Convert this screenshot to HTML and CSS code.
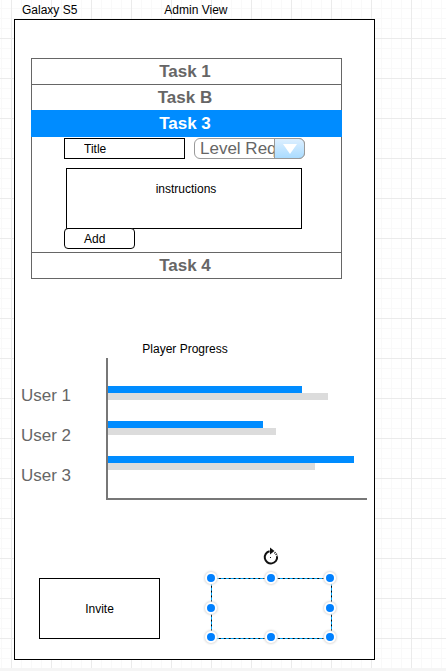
FILE: index.html
```html
<!DOCTYPE html>
<html lang="en">
<head>
<meta charset="utf-8">
<title>Admin View</title>
<link rel="stylesheet" href="styles.css">
</head>
<body>
<main class="canvas">
  <header class="captions">
    <span>Galaxy S5</span>
    <span>Admin View</span>
  </header>
  <div class="device">
    <section class="tasks">
      <button class="task" type="button">Task 1</button>
      <button class="task" type="button">Task B</button>
      <button class="task task-active" type="button">Task 3</button>
      <form class="task-form">
        <div class="fields">
          <input class="title-field" type="text" value="Title" aria-label="Title">
          <div class="level">
            <select class="level-select" aria-label="Level Req">
              <option>Level Req</option>
            </select>
            <span class="level-arrow">
              <svg width="14" height="10" viewBox="0 0 14 10" aria-hidden="true"><path d="M0 0H14L7 10Z" fill="#fff"/></svg>
            </span>
          </div>
        </div>
        <textarea class="instructions" aria-label="instructions">instructions</textarea>
        <button class="add" type="button">Add</button>
      </form>
      <button class="task task-last" type="button">Task 4</button>
    </section>

    <figure class="progress">
      <figcaption class="progress-title">Player Progress</figcaption>
      <div class="chart">
        <ul class="users">
          <li>User 1</li>
          <li>User 2</li>
          <li>User 3</li>
        </ul>
        <div class="plot">
          <div class="pair"><div class="bar bar-blue" style="width:75%"></div><div class="bar" style="width:85%"></div></div>
          <div class="pair"><div class="bar bar-blue" style="width:60%"></div><div class="bar" style="width:65%"></div></div>
          <div class="pair"><div class="bar bar-blue" style="width:95%"></div><div class="bar" style="width:80%"></div></div>
        </div>
      </div>
    </figure>

    <div class="actions">
      <button class="box" type="button">Invite</button>
      <div class="box selected">
        <svg class="rotate" width="20" height="20" viewBox="0 0 20 20" aria-hidden="true">
          <path d="M8.6 4.2A6.2 6.2 0 1 0 16.1 9.5" fill="none" stroke="#111" stroke-width="2"/>
          <path d="M9 0.5L13.5 4L9 7.5Z" fill="#111"/>
          <path d="M13.5 5.5A6.2 6.2 0 0 1 16.1 9.5" fill="none" stroke="#111" stroke-width="2" stroke-dasharray="1 1"/>
          <rect x="9" y="10" width="1" height="1" fill="#111"/>
        </svg>
        <i class="handle top left"></i>
        <i class="handle top center"></i>
        <i class="handle top right"></i>
        <i class="handle middle left"></i>
        <i class="handle middle right"></i>
        <i class="handle bottom left"></i>
        <i class="handle bottom center"></i>
        <i class="handle bottom right"></i>
      </div>
    </div>
  </div>
</main>
</body>
</html>
```
FILE: styles.css
```css
* {
  box-sizing: border-box;
}

body {
  margin: 0;
  background: #f5f5f5;
  color: #000;
  font: 12px/16px "Liberation Sans", Arial, sans-serif;
}

button,
input,
select,
textarea {
  margin: 0;
  border-radius: 0;
  color: inherit;
  font: inherit;
}

.canvas {
  padding: 0 71px 8px 14px;
  background-color: #fff;
  background-image:
    linear-gradient(to right, #ebebeb 1px, transparent 1px),
    linear-gradient(to bottom, #ebebeb 1px, transparent 1px),
    linear-gradient(to right, #f9f9f9 1px, transparent 1px),
    linear-gradient(to bottom, #f9f9f9 1px, transparent 1px);
  background-position: 11px 0, 0 38px, 1px 0, 0 8px;
  background-size: 40px 40px, 40px 40px, 10px 10px, 10px 10px;
}

.captions {
  display: flex;
  gap: 87px;
  height: 19px;
  padding: 2px 8px 0;
}

.device {
  padding: 38px 0 20px;
  border: 1px solid #000;
  background: #fff;
}

.tasks {
  margin: 0 32px 0 16px;
  border: 1px solid #666;
}

.task {
  display: block;
  width: 100%;
  height: 26px;
  padding: 1px 3px 0 0;
  border: 0;
  border-bottom: 1px solid #666;
  background: #fff;
  color: #666;
  font-size: 17px;
  font-weight: bold;
  line-height: 24px;
}

.task-active {
  width: calc(100% + 2px);
  height: 27px;
  margin: -1px -1px 0;
  border: 0;
  background: #008cff;
  color: #fff;
}

.task-last {
  border-top: 1px solid #666;
  border-bottom: 0;
}

.task-form {
  padding: 1px 36px 3px 32px;
}

.fields {
  display: flex;
  gap: 9px;
  margin-bottom: 9px;
}

.title-field {
  width: 121px;
  height: 21px;
  padding: 0 19px;
  border: 1px solid #000;
  background: #fff;
}

.level {
  display: flex;
  position: relative;
  width: 111px;
  height: 21px;
}

.level-select {
  width: 100%;
  padding: 1px 28px 0 5px;
  border: 1px solid #999;
  border-radius: 6px;
  appearance: none;
  background: #fff;
  color: #666;
  font-size: 17px;
  line-height: 18px;
}

.level-arrow {
  display: flex;
  position: absolute;
  top: 0;
  right: 0;
  bottom: 0;
  align-items: center;
  justify-content: center;
  width: 31px;
  border: 1px solid #999;
  border-radius: 0 6px 6px 0;
  background: linear-gradient(#ddefff, #aadcff);
  pointer-events: none;
}

.instructions {
  display: block;
  width: calc(100% - 5px);
  height: 61px;
  margin-left: 2px;
  padding: 12px 0 0 4px;
  border: 1px solid #000;
  background: #fff;
  resize: none;
  text-align: center;
}

.add {
  display: block;
  position: relative;
  width: 71px;
  height: 21px;
  margin-top: -1px;
  padding: 0 19px;
  border: 1px solid #000;
  border-radius: 4px;
  background: #fff;
  text-align: left;
}

.progress {
  margin: 62px 0 0;
  padding: 0 7px 0 6px;
}

.progress-title {
  margin-bottom: 1px;
  padding-right: 18px;
  text-align: center;
}

.chart {
  display: grid;
  grid-template-columns: 85px 1fr;
}

.users {
  margin: 0;
  padding: 18px 0 0;
  color: #666;
  font-size: 17px;
  line-height: 40px;
  list-style: none;
}

.plot {
  display: flex;
  flex-direction: column;
  gap: 21px;
  padding: 28px 0;
  border: solid #777;
  border-width: 0 0 2px 2px;
}

.bar {
  height: 7px;
  background: #dcdcdc;
}

.bar-blue {
  background: #008cff;
}

.actions {
  display: flex;
  gap: 51px;
  margin-top: 78px;
  padding: 0 42px 0 24px;
}

.box {
  flex: 1;
  height: 61px;
  padding: 0;
  border: 1px solid #000;
  background: #fff;
}

.selected {
  position: relative;
}

.selected::before {
  content: "";
  position: absolute;
  inset: -1px;
  border: 1px dashed #00a8ff;
}

.handle {
  position: absolute;
  width: 12px;
  height: 12px;
  margin: -7px;
  border: 2px solid #fff;
  border-radius: 50%;
  background: #0080ff;
  box-shadow: 0 0 2px 1px #ddd;
}

.top {
  top: 0;
}

.middle {
  top: 50%;
}

.bottom {
  top: 100%;
}

.left {
  left: 0;
}

.center {
  left: 50%;
}

.right {
  left: 100%;
}

.rotate {
  position: absolute;
  top: -32px;
  left: calc(50% - 11px);
}
```
